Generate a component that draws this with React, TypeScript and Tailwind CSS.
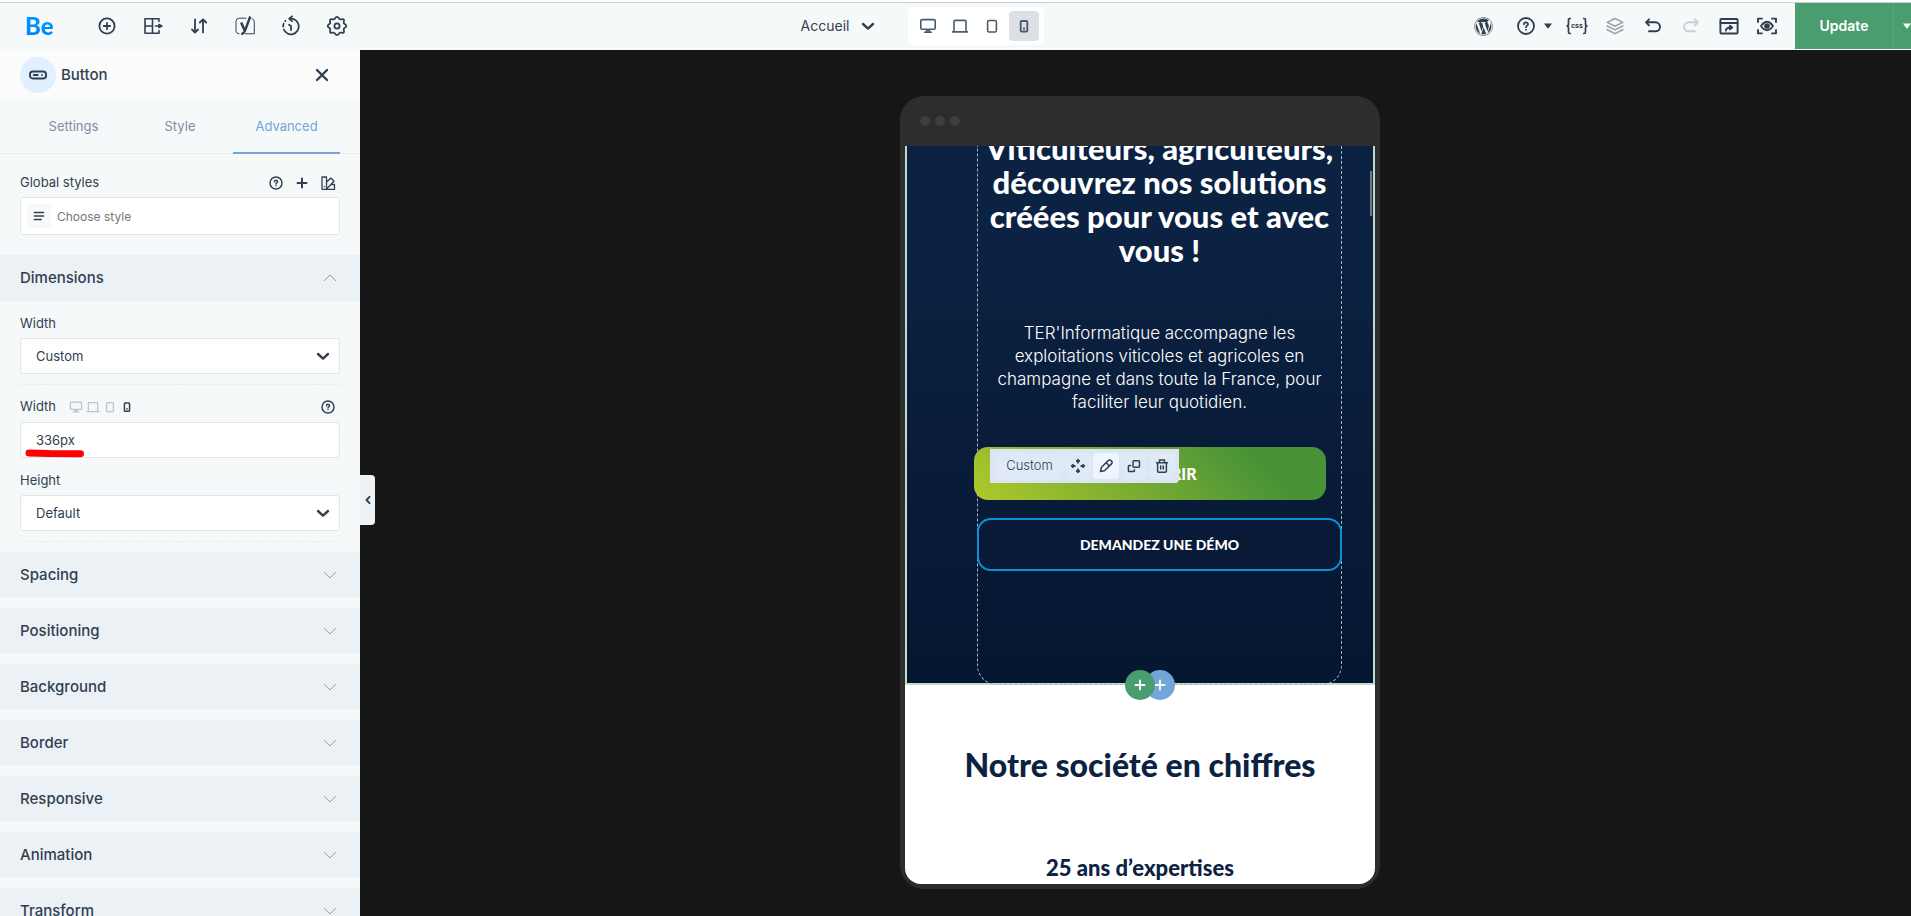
import type { ReactNode } from "react";
import { FaWordpress } from "react-icons/fa";

type IconProps = { size?: number; className?: string; sw?: number; box?: number; children: ReactNode };

function Icon({ size = 24, className = "", sw = 1.6, box = 24, children }: IconProps) {
  return (
    <svg
      width={size}
      height={size}
      viewBox={`0 0 ${box} ${box}`}
      fill="none"
      stroke="currentColor"
      strokeWidth={sw}
      strokeLinecap="round"
      strokeLinejoin="round"
      className={`shrink-0 ${className}`}
      aria-hidden="true"
    >
      {children}
    </svg>
  );
}

const AddIcon = () => (
  <Icon sw={1.8}>
    <circle cx="12" cy="12" r="7.600" />
    <path d="M12 8.800v6.400M8.800 12h6.400" />
  </Icon>
);
const BlocksIcon = () => (
  <Icon>
    <path d="M18 7.500V4.700H4v14.600h14v-2.800M11.500 4.700v14.600M4 12h7.500M14.500 12h3M18 10.500L20.800 12 18 13.500z" />
  </Icon>
);
const SortIcon = () => (
  <Icon sw={1.8}>
    <path d="M8 5.500v13M5 15.500l3 3 3-3M16 18.500v-13M12.800 8.500l3.200-3.200 3.200 3.200" />
  </Icon>
);
const YoastIcon = () => (
  <Icon>
    <path d="M13 4.200H6.200A3.200 3.200 0 0 0 3 7.400v9.200c0 1.800 1 3.200 3 3.200M19 4.700c1.600.6 2.300 1.700 2.300 3v12.100H12.500" strokeWidth="1" />
    <path d="M8.200 8.500l3.300 7.600" strokeWidth="2.600" strokeLinecap="butt" />
    <path d="M17.200 2.500l-4.500 12.300c-1 3-2 5-4.500 5.300" strokeWidth="2.400" strokeLinecap="butt" />
  </Icon>
);
const HistoryIcon = () => (
  <Icon sw={1.8}>
    <path d="M10.500 4.700H12a7.800 7.800 0 1 1-7.200 10.800M4.200 12.500a7.800 7.800 0 0 1 .4-2.800M6.200 7.200l.3-.3" />
    <path d="M13 2.300L10.300 4.700l2.700 2.500M10 10.700l2 1.400v4" />
  </Icon>
);
const GearIcon = () => (
  <Icon sw={1.8}>
    <circle cx="12" cy="12" r="2.600" />
    <path d="M12 2.800c1.700 0 1.900 2 3 2.500s2.700-.8 3.700.2-.4 2.600.1 3.700 2.500 1.200 2.500 2.800-2 1.700-2.500 2.800.9 2.700-.1 3.700-2.600-.3-3.700.2-1.300 2.500-3 2.500-1.900-2-3-2.500-2.700.8-3.700-.2.400-2.600-.1-3.700-2.500-1.200-2.500-2.800 2-1.700 2.500-2.800-.9-2.700.1-3.700 2.600.3 3.700-.2 1.300-2.500 3-2.500z" />
  </Icon>
);
const HelpIcon = ({ size = 24 }: { size?: number }) => (
  <Icon size={size} sw={size < 20 ? 2 : 1.8}>
    <circle cx="12" cy="12" r="8" />
    <path d="M10 10.300c0-2.500 4-2.500 4-.1 0 1.500-2 1.400-2 3M12 15.600v.1" />
  </Icon>
);
const DesktopIcon = ({ size = 18 }: { size?: number }) => (
  <Icon size={size} box={18}>
    <rect x="1.800" y="2.600" width="14.400" height="9.600" rx="1.200" />
    <path d="M7.500 13h3v2h-3zM5.500 15.300h7" />
  </Icon>
);
const LaptopIcon = ({ size = 18 }: { size?: number }) => (
  <Icon size={size} box={18}>
    <path d="M3 13.800V4.400c0-.6.400-1 1-1h10c.6 0 1 .4 1 1v9.400M1.500 14.900h15" />
  </Icon>
);
const TabletIcon = ({ size = 18 }: { size?: number }) => (
  <Icon size={size} box={18}>
    <rect x="4.600" y="3.500" width="8.800" height="11.500" rx="1.500" />
  </Icon>
);
const PhoneIcon = ({ size = 18 }: { size?: number }) => (
  <Icon size={size} box={18} sw={1.9}>
    <rect x="5.700" y="4" width="6.600" height="10.500" rx="1" />
    <path d="M9 11.300v.4" strokeWidth="2" />
  </Icon>
);
const CaretDown = ({ className = "" }: { className?: string }) => (
  <Icon size={14} box={14} sw={2.4} className={className}>
    <path d="M2 5l5 4.600L12 5" />
  </Icon>
);
const Solid = ({ className = "" }: { className?: string }) => (
  <svg width="8" height="6" viewBox="0 0 8 6" fill="currentColor" className={`shrink-0 ${className}`} aria-hidden="true">
    <path d="M0 .5h8L4.700 5q-.7.8-1.400 0z" />
  </svg>
);

function ToolButton({ label, children, className = "w-[38px] justify-center" }: { label: string; children: ReactNode; className?: string }) {
  return (
    <button type="button" aria-label={label} className={`flex h-full items-center ${className}`}>
      {children}
    </button>
  );
}

function TopBar() {
  const left = [
    { label: "Add element", icon: <AddIcon /> },
    { label: "Pre-built sections", icon: <BlocksIcon /> },
    { label: "Navigator", icon: <SortIcon /> },
    { label: "Yoast SEO", icon: <YoastIcon /> },
    { label: "History", icon: <HistoryIcon /> },
    { label: "Settings", icon: <GearIcon /> },
  ];
  const devices = [
    { label: "Desktop", icon: <DesktopIcon /> },
    { label: "Laptop", icon: <LaptopIcon /> },
    { label: "Tablet", icon: <TabletIcon /> },
    { label: "Mobile", icon: <PhoneIcon />, active: true },
  ];
  return (
    <header className="flex h-[50px] shrink-0 justify-between border-t-2 border-white bg-[#f5f9fa] text-[#304050]">
      <div className="flex grow justify-between border-t border-[#cccfd1]">
        <div className="mr-5 flex items-center pb-px">
          <a href="#home" className="w-[84px] bg-gradient-to-b from-[#00a2ff] to-[#007cf8] bg-clip-text pl-[25px] font-[Lato] text-[24px] leading-8 font-black text-transparent">
            Be
          </a>
          {left.map((t) => (
            <button key={t.label} type="button" aria-label={t.label} className="flex h-full w-[46px] items-center justify-center">
              {t.icon}
            </button>
          ))}
        </div>

        <div className="flex items-center pb-px">
          <button type="button" className="flex items-center gap-3 pr-[33px] text-sm">
            Accueil
            <CaretDown />
          </button>
          <div className="flex gap-[2px] rounded bg-white px-[5px] py-1">
            {devices.map((d) => (
              <button
                key={d.label}
                type="button"
                aria-label={d.label}
                className={`flex size-[30px] items-center justify-center rounded ${d.active ? "bg-[#dce0e5]" : ""} text-[#4d5c6b]`}
              >
                {d.icon}
              </button>
            ))}
          </div>
        </div>

        <div className="flex items-center pb-px">
          <ToolButton label="WordPress">
            <FaWordpress size={19} />
          </ToolButton>
          <ToolButton label="Help" className="w-[55px] gap-[6px] pl-[11px]">
            <HelpIcon />
            <Solid />
          </ToolButton>
          <ToolButton label="Custom CSS">
            <span className="flex items-center text-[7px] font-bold">
              <svg width="5" height="18" viewBox="0 0 5 18" fill="none" stroke="currentColor" strokeWidth="1.700" aria-hidden="true">
                <path d="M5 1.500H3.800Q2.500 1.500 2.500 3v4Q2.500 9 .5 9q2 0 2 2v4q0 1.500 1.300 1.500H5" />
              </svg>
              css
              <svg width="5" height="18" viewBox="0 0 5 18" fill="none" stroke="currentColor" strokeWidth="1.700" aria-hidden="true">
                <path d="M0 1.500h1.200q1.300 0 1.300 1.500v4q0 2 2 2-2 0-2 2v4q0 1.500-1.300 1.500H0" />
              </svg>
            </span>
          </ToolButton>
          <ToolButton label="Layers" className="w-[38px] justify-center text-[#98a1aa]">
            <Icon>
              <path d="M12 4.500l7.800 3.900L12 12.300 4.200 8.400zM4.200 12l7.800 3.900 7.800-3.900M4.200 15.700l7.800 3.900 7.800-3.900" />
            </Icon>
          </ToolButton>
          <ToolButton label="Undo">
            <Icon sw={1.9}>
              <path d="M8 5.300L5 8.300l3 3M5 8.300h9.500a4.500 4.500 0 0 1 0 9H8" />
            </Icon>
          </ToolButton>
          <ToolButton label="Redo" className="w-[38px] justify-center text-[#c9cfd4]">
            <Icon sw={1.9}>
              <path d="M16 5.300l3 3-3 3M19 8.300H9.500a4.500 4.500 0 0 0 0 9H16" />
            </Icon>
          </ToolButton>
          <ToolButton label="Preview">
            <Icon sw={1.9}>
              <rect x="3.400" y="5" width="17.200" height="14.500" rx="1" />
              <path d="M3.500 9h17M8.800 16.500c.2-2 1.800-3 5.200-3M13 11.700l2.200 1.800-2.200 1.800z" />
            </Icon>
          </ToolButton>
          <ToolButton label="View page">
            <Icon sw={1.9}>
              <path d="M7 4.600H3V8M17 4.600h4V8M7 19.400H3V16M17 19.400h4V16M6 12q6-8.500 12 0-6 8.500-12 0z" />
              <circle cx="12" cy="12" r="1.900" fill="currentColor" />
            </Icon>
          </ToolButton>
          <div className="ml-[9px] flex h-[46px] self-start bg-[#4a9d6e] text-white">
            <button type="button" className="w-[98px] text-sm font-semibold">Update</button>
            <button type="button" aria-label="More update options" className="flex w-[18px] items-center overflow-hidden border-l border-[#5ba67c] pl-[9px]">
              <Solid />
            </button>
          </div>
        </div>
      </div>
    </header>
  );
}

function SelectField({ id, value, options }: { id: string; value: string; options: string[] }) {
  return (
    <div className="relative">
      <select
        id={id}
        defaultValue={value}
        className="h-9 w-full appearance-none rounded-[3px] border border-[#e1e6eb] bg-white px-[15px] pt-px text-[13px]"
      >
        {options.map((o) => (
          <option key={o}>{o}</option>
        ))}
      </select>
      <CaretDown className="pointer-events-none absolute top-[11px] right-[10px]" />
    </div>
  );
}

function SectionBar({ title, open = false }: { title: string; open?: boolean }) {
  return (
    <button type="button" aria-expanded={open} className="flex h-[46px] w-full shrink-0 items-center justify-between bg-[#ecf1f6] pr-6 pl-5 text-[15px] font-medium">
      {title}
      <Icon size={12} box={12} sw={1} className="text-[#969da5]">
        <path d={open ? "M0 9l6-6 6 6" : "M0 3l6 6 6-6"} />
      </Icon>
    </button>
  );
}

function Sidebar() {
  return (
    <aside className="relative flex w-[360px] shrink-0 flex-col bg-[#f5f9fa] text-[#304050]">
      <div className="flex h-[50px] shrink-0 items-center bg-[#fbfbfc] pr-[30px] pl-5">
        <span className="flex size-9 items-center justify-center rounded-full bg-[#e1f0ff]">
          <Icon size={18} box={18} sw={1.9}>
            <rect x="1" y="5.500" width="16" height="7" rx="2.800" />
            <path d="M4.800 9h4M13 9v.1" strokeWidth="1.800" />
          </Icon>
        </span>
        <h2 className="ml-[5px] grow text-[15px] font-medium">Button</h2>
        <button type="button" aria-label="Close">
          <Icon size={16} box={16} sw={2.4}>
            <path d="M3 3l10 10M13 3L3 13" />
          </Icon>
        </button>
      </div>

      <div role="tablist" className="flex h-[54px] shrink-0 border-b border-[#e8edf0] px-5 text-[13px] text-[#7f8ea3]">
        <button type="button" role="tab" aria-selected="false" className="w-[107px]">Settings</button>
        <button type="button" role="tab" aria-selected="false" className="w-[106px]">Style</button>
        <button type="button" role="tab" aria-selected="true" className="mb-[-1px] w-[107px] border-b-2 border-[#72a5d8] pt-px text-[#72a5d8]">
          Advanced
        </button>
      </div>

      <div className="px-5 pt-[19px] pb-5">
        <div className="flex h-5 items-center">
          <label htmlFor="global-style" className="grow text-[13px]">Global styles</label>
          <div className="flex items-center gap-2 pr-[3px]">
            <button type="button" aria-label="Help"><HelpIcon size={18} /></button>
            <button type="button" aria-label="Add style">
              <Icon size={18} box={18} sw={2}><path d="M9 4.500v9M4.500 9h9" /></Icon>
            </button>
            <button type="button" aria-label="Style library">
              <Icon size={18} box={18} sw={1.3}>
                <path d="M3 3h4.500v12.300H3zM7.500 8.300l4.300-4.300 3.200 3.200-7.500 7.800M11.800 10.500h3.700v4.800H7.500M5.200 12.500v.2" />
              </Icon>
            </button>
          </div>
        </div>
        <div className="mt-1 flex h-[38px] items-center rounded-[3px] border border-[#e1e6eb] bg-white px-[6px]">
          <span className="flex size-6 items-center justify-center rounded bg-[#f9f9fa]">
            <Icon size={12} box={12} sw={1.7}>
              <path d="M1.500 2.500h9M1.500 6h9M1.500 9.500h6.500" />
            </Icon>
          </span>
          <input id="global-style" placeholder="Choose style" className="min-w-0 grow px-[6px] pt-px text-xs outline-none placeholder:text-[#777]" />
        </div>
      </div>

      <SectionBar title="Dimensions" open />

      <div className="flex flex-col px-5 pt-3">
        <label htmlFor="width-mode" className="mb-[5px] h-5 text-[13px] leading-5">Width</label>
        <SelectField id="width-mode" value="Custom" options={["Default", "Custom"]} />
        <hr className="mt-[10px] border-dashed border-[#e6ecf0]" />

        <div className="mt-3 flex h-5 items-center">
          <label htmlFor="width-value" className="text-[13px]">Width</label>
          <div className="ml-[13px] flex grow items-center gap-[3px] text-[#bcc3c9]">
            <DesktopIcon size={14} />
            <LaptopIcon size={14} />
            <TabletIcon size={14} />
            <span className="text-[#304050]"><PhoneIcon size={14} /></span>
          </div>
          <button type="button" aria-label="Help about width" className="pr-[3px]"><HelpIcon size={18} /></button>
        </div>
        <div className="relative mt-[5px]">
          <input id="width-value" defaultValue="336px" className="h-9 w-full rounded-[3px] border border-[#e1e6eb] bg-white px-[15px] text-[13px] outline-none" />
          <svg width="60" height="9" viewBox="0 0 60 9" className="pointer-events-none absolute top-[27px] left-[5px]" aria-hidden="true">
            <path d="M4 4l20 .6 31.500.2" stroke="#fe0000" strokeWidth="7" strokeLinecap="round" fill="none" />
          </svg>
        </div>

        <label htmlFor="height-mode" className="mt-3 mb-[5px] h-5 text-[13px] leading-5">Height</label>
        <SelectField id="height-mode" value="Default" options={["Default", "Custom"]} />
        <hr className="mt-[10px] border-dashed border-[#e6ecf0]" />
      </div>

      <div className="mt-[10px] flex min-h-0 flex-1 flex-col gap-[10px] overflow-hidden">
        {["Spacing", "Positioning", "Background", "Border", "Responsive", "Animation", "Transform"].map((t) => (
          <SectionBar key={t} title={t} />
        ))}
      </div>

      <button type="button" aria-label="Collapse panel" className="absolute top-[425px] left-full flex h-[50px] w-[15px] items-center justify-center rounded-r bg-[#eef2f5]">
        <Icon size={10} box={10} sw={1.9}>
          <path d="M6.500 1.800L3.500 5l3 3.200" />
        </Icon>
      </button>
    </aside>
  );
}

function ElementToolbar() {
  const tool = "flex size-[26px] items-center justify-center rounded bg-[#e0eaf7]";
  return (
    <div className="absolute top-[2px] left-4 flex items-center gap-[2px] rounded-br bg-[#dce5f3] py-1 pr-1 pl-[6px] text-[#304050]">
      <span className="flex h-[26px] w-[67px] items-center justify-center rounded bg-[#e0eaf7] text-[13px] font-light text-[#304050]">Custom</span>
      <button type="button" aria-label="Move" className={tool}>
        <Icon size={16} box={16} sw={1.8}>
          <path d="M8 1.800v3M8 11.200v3M1.800 8h3M11.200 8h3M6.800 3L8 1.800 9.200 3M6.800 13L8 14.200 9.200 13M3 6.800L1.800 8 3 9.200M13 6.800L14.200 8 13 9.200" />
        </Icon>
      </button>
      <button type="button" aria-label="Edit" className="flex size-[26px] items-center justify-center rounded bg-[#eef5ff]">
        <Icon size={16} box={16} sw={1.5}>
          <path d="M2.500 13.500l.8-4L10 2.800a2.300 2.300 0 0 1 3.300 3.300L6.500 12.800zM8.300 4.800l3 3.200" />
        </Icon>
      </button>
      <button type="button" aria-label="Duplicate" className={tool}>
        <Icon size={16} box={16} sw={1.5}>
          <rect x="7" y="2.800" width="6.500" height="6.500" rx="1" />
          <path d="M4.500 7.500H3.200c-.5 0-.8.300-.8.800v4.400c0 .5.300.8.800.8h4.400c.5 0 .8-.3.800-.8V11.700" />
        </Icon>
      </button>
      <button type="button" aria-label="Delete" className={tool}>
        <Icon size={16} box={16} sw={1.5}>
          <path d="M2.500 4.700h11M5.500 4.500V2h5v2.500M3.600 5v8.300c0 .6.300.9.900.9h7c.6 0 .9-.3.900-.9V5M6.700 8v3M9.300 8v3" />
        </Icon>
      </button>
    </div>
  );
}

function PhonePreview() {
  return (
    <div className="flex w-[480px] flex-col overflow-hidden rounded-[24px] bg-[#2d2d2f] px-[5px] pb-[5px]">
      <div className="flex h-[50px] shrink-0 items-center gap-[5px] pl-[15px]">
        <span className="size-[10px] rounded-full bg-[#3f3f42]" />
        <span className="size-[10px] rounded-full bg-[#3f3f42]" />
        <span className="size-[10px] rounded-full bg-[#3f3f42]" />
      </div>
      <div className="relative min-h-0 flex-1 overflow-hidden rounded-b-[16px] bg-white">
        <section className="relative h-[539px] border-x-2 border-b-2 border-[#bfdccb] bg-gradient-to-b from-[#0c2242] from-20% to-[#051630] pl-[70px]">
          <div className="flow-root h-[539px] w-[365px] rounded-b-[20px] border border-t-0 border-dashed border-[#a9b4c2] text-center text-white">
            <h1 className="mt-[-15px] font-[Lato] text-[31px] leading-[34px] font-black whitespace-nowrap">
              Viticulteurs, agriculteurs,
              <br />
              découvrez nos solutions
              <br />
              créées pour vous et avec
              <br />
              vous !
            </h1>
            <p className="mt-[55px] text-[17px] leading-[23px] font-light whitespace-nowrap">
              TER'Informatique accompagne les
              <br />
              exploitations viticoles et agricoles en
              <br />
              champagne et dans toute la France, pour
              <br />
              faciliter leur quotidien.
            </p>
            <div className="relative mt-[33px] ml-[-4px] w-[352px]">
              <a href="#decouvrir" className="flex h-[53px] items-center justify-center rounded-[14px] bg-[linear-gradient(45deg,#b0c92b_0%,#489237_80%)] font-[Lato] text-base font-black">
                DÉCOUVRIR
              </a>
              <ElementToolbar />
            </div>
            <a href="#demo" className="mx-[-1px] mt-[18px] flex h-[53px] items-center justify-center rounded-[14px] border-2 border-[#0b8fd6] bg-[#081a37] font-[Lato] text-sm font-black">
              DEMANDEZ UNE DÉMO
            </a>
          </div>
          <div className="absolute bottom-[-17px] left-[218px] flex text-white">
            <button type="button" aria-label="Add section" className="z-10 flex size-[30px] items-center justify-center rounded-full bg-[#4a9d6e]">
              <Icon size={12} box={12} sw={1.8}><path d="M6 1.500v9M1.500 6h9" /></Icon>
            </button>
            <button type="button" aria-label="Add wrap" className="ml-[-10px] flex size-[30px] items-center justify-center rounded-full bg-[#72a5d8]">
              <Icon size={12} box={12} sw={1.8}><path d="M6 1.500v9M1.500 6h9" /></Icon>
            </button>
          </div>
        </section>
        <section className="flex flex-col items-center pt-[60px] font-[Lato] font-black whitespace-nowrap text-[#0c2242]">
          <h2 className="text-[32px] leading-10">Notre société en chiffres</h2>
          <h3 className="mt-[69px] text-[22px] leading-7">25 ans d’expertises</h3>
        </section>
        <span className="absolute top-[25px] right-[3px] h-[45px] w-[2px] bg-[#7b7b7f]" />
      </div>
    </div>
  );
}

export default function App() {
  return (
    <div className="flex h-screen flex-col overflow-hidden bg-[#161616] font-[Inter,sans-serif]">
      <TopBar />
      <div className="flex min-h-0 flex-1">
        <Sidebar />
        <main className="flex min-w-0 flex-1 justify-center pt-[46px] pb-[27px] pl-[9px]">
          <PhonePreview />
        </main>
      </div>
    </div>
  );
}
